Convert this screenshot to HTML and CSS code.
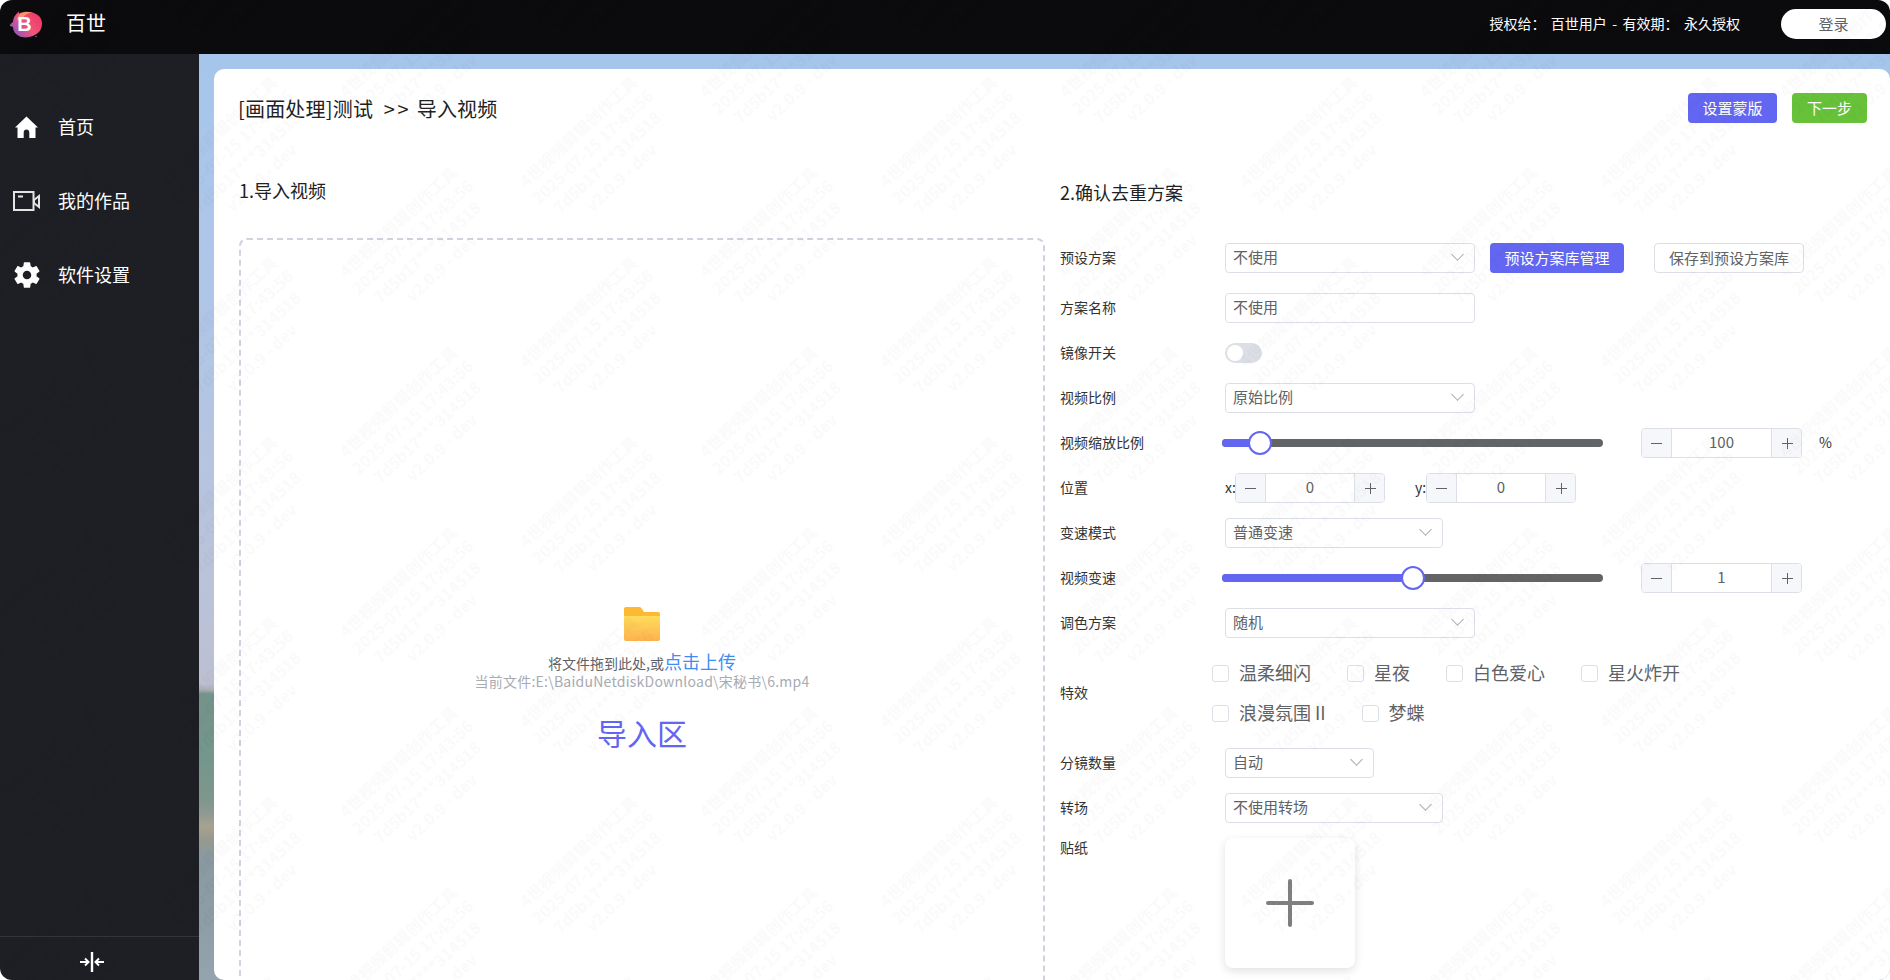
FILE: index.html
```html
<!DOCTYPE html>
<html lang="zh-CN">
<head>
<meta charset="utf-8">
<title>百世</title>
<link rel="stylesheet" href="styles.css">
</head>
<body>
<svg class="sprites" width="0" height="0" aria-hidden="true">
  <symbol id="i-minus" viewBox="0 0 11 11"><path d="M0 5.500h11"/></symbol>
  <symbol id="i-plus" viewBox="0 0 11 11"><path d="M0 5.500h11M5.500 0v11"/></symbol>
</svg>
<div class="app">
  <header class="topbar">
    <svg class="logo" viewBox="0 0 34 28" width="34" height="28">
      <defs>
        <linearGradient id="logo-g" x1="0.95" y1="0.2" x2="0.05" y2="0.8">
          <stop offset="0" stop-color="#ee3a68"/>
          <stop offset="0.5" stop-color="#f0557a"/>
          <stop offset="1" stop-color="#8a55c4"/>
        </linearGradient>
      </defs>
      <path class="logo-blob" d="M10 2.500C15-.5 25 0 30 5c4 4 4 11 0 16-5 5-14 7-20 4-4-2-6-5-6-9-2-1-4-1-3-2 1-2 2-2 3-3 0-4 2-7 6-10.500z"/>
      <path class="logo-flare" d="M11 3c3-2 8-2.500 12-1.500-4 .5-7 2-9 5-1.500 1.800-4 2.500-6 2.500.5-2.500 1.500-4.500 3-6z"/>
      <text class="logo-b" x="15.500" y="19.500">B</text>
      <circle class="logo-dot" cx="27" cy="25.500" r=".8"/>
    </svg>
    <span class="brand">百世</span>
    <div class="topbar-right">
      <span class="license">授权给： 百世用户 - 有效期： 永久授权</span>
      <button class="login">登录</button>
    </div>
  </header>
  <div class="body">
    <aside class="sidebar">
      <nav class="nav">
        <a class="nav-item">
          <svg class="nav-icon" viewBox="0 0 24 24"><path class="fill-w" d="M12 1.500 23.500 12.400H21V23h-6.200v-5.600c0-1.600-1.200-2.800-2.800-2.800s-2.800 1.200-2.800 2.800V23H3V12.400H.5z"/></svg>
          <span>首页</span>
        </a>
        <a class="nav-item">
          <svg class="nav-icon" viewBox="0 0 27 20"><path class="line-w" d="M1 1h19.500v18H1zM5 5.500h5"/><path class="line-w" d="M21 9l5-4v11l-5-4z"/></svg>
          <span>我的作品</span>
        </a>
        <a class="nav-item">
          <svg class="nav-icon gear" viewBox="0 0 24 24"><path class="fill-w" d="M19.140 12.940c.04-.3.06-.61.06-.94 0-.32-.02-.64-.07-.94l2.030-1.580a.49.49 0 0 0 .12-.61l-1.920-3.320a.49.49 0 0 0-.59-.22l-2.390.96c-.5-.38-1.030-.7-1.620-.94l-.36-2.540a.484.484 0 0 0-.48-.41h-3.840c-.24 0-.43.17-.47.41l-.36 2.540c-.59.24-1.130.57-1.620.94l-2.390-.96c-.22-.08-.47 0-.59.22L2.740 8.870c-.12.21-.08.47.12.61l2.030 1.580c-.05.3-.09.63-.09.94s.02.64.07.94l-2.030 1.580a.49.49 0 0 0-.12.61l1.920 3.320c.12.22.37.29.59.22l2.390-.96c.5.38 1.030.7 1.620.94l.36 2.540c.05.24.24.41.48.41h3.840c.24 0 .44-.17.47-.41l.36-2.540c.59-.24 1.130-.56 1.620-.94l2.390.96c.22.08.47 0 .59-.22l1.920-3.320c.12-.22.07-.47-.12-.61l-2.010-1.580zM12 15.200a3.200 3.200 0 1 1 0-6.400 3.200 3.200 0 0 1 0 6.400z"/></svg>
          <span>软件设置</span>
        </a>
      </nav>
      <div class="side-foot">
        <svg class="collapse" viewBox="0 0 26 22" width="26" height="22"><path d="M13 1v20" class="cbar"/><path d="M1 11h8M6 7.500 9.500 11 6 14.500M25 11h-8M20 7.500 16.500 11l3.500 3.500" class="carrow"/></svg>
      </div>
    </aside>
    <main class="main">
      <section class="card">
        <div class="card-head">
          <h1 class="page-title">[画面处理]测试 <span class="gt">&gt;&gt;</span> 导入视频</h1>
          <div class="head-actions">
            <button class="btn btn-primary">设置蒙版</button>
            <button class="btn btn-green">下一步</button>
          </div>
        </div>
        <div class="columns">
          <div class="col-left">
            <h2 class="sec-title">1.导入视频</h2>
            <div class="dropzone">
              <svg class="folder" viewBox="0 0 36 34" width="36" height="34">
                <defs>
                  <linearGradient id="folder-g" x1="0" y1="0" x2="0" y2="1">
                    <stop offset="0" stop-color="#ffdc5c"/>
                    <stop offset="1" stop-color="#fdb24e"/>
                  </linearGradient>
                </defs>
                <path class="folder-back" d="M2 0h13c1.500 0 2 .5 3 2l2 3h14c1.200 0 2 .8 2 2v6H0V2C0 .8.8 0 2 0z"/>
                <path class="folder-front" d="M0 9h36v23c0 1.200-.8 2-2 2H2c-1.200 0-2-.8-2-2z"/>
              </svg>
              <p class="drop-line">将文件拖到此处,或<span class="drop-link">点击上传</span></p>
              <p class="drop-file">当前文件:E:\BaiduNetdiskDownload\宋秘书\6.mp4</p>
              <p class="drop-big">导入区</p>
            </div>
          </div>
          <div class="col-right">
            <h2 class="sec-title sec-title-form">2.确认去重方案</h2>
            <div class="row row-first">
              <label class="lbl">预设方案</label>
              <div class="select w-250"><span>不使用</span><i class="chev"></i></div>
              <button class="btn btn-primary btn-form">预设方案库管理</button>
              <button class="btn btn-plain btn-form">保存到预设方案库</button>
            </div>
            <div class="row">
              <label class="lbl">方案名称</label>
              <div class="select w-250"><span>不使用</span></div>
            </div>
            <div class="row">
              <label class="lbl">镜像开关</label>
              <div class="switch"><i class="knob"></i></div>
            </div>
            <div class="row">
              <label class="lbl">视频比例</label>
              <div class="select w-250"><span>原始比例</span><i class="chev"></i></div>
            </div>
            <div class="row">
              <label class="lbl">视频缩放比例</label>
              <div class="slider"><i class="fill" style="width:10%"></i><i class="thumb" style="left:10%"></i></div>
              <div class="num w-161">
                <span class="num-btn"><svg class="sign"><use href="#i-minus"/></svg></span>
                <span class="num-val">100</span>
                <span class="num-btn num-btn-r"><svg class="sign"><use href="#i-plus"/></svg></span>
              </div>
              <span class="unit">%</span>
            </div>
            <div class="row">
              <label class="lbl">位置</label>
              <span class="axis">x:</span>
              <div class="num w-150">
                <span class="num-btn"><svg class="sign"><use href="#i-minus"/></svg></span>
                <span class="num-val">0</span>
                <span class="num-btn num-btn-r"><svg class="sign"><use href="#i-plus"/></svg></span>
              </div>
              <span class="axis axis-y">y:</span>
              <div class="num w-150">
                <span class="num-btn"><svg class="sign"><use href="#i-minus"/></svg></span>
                <span class="num-val">0</span>
                <span class="num-btn num-btn-r"><svg class="sign"><use href="#i-plus"/></svg></span>
              </div>
            </div>
            <div class="row">
              <label class="lbl">变速模式</label>
              <div class="select w-218"><span>普通变速</span><i class="chev"></i></div>
            </div>
            <div class="row">
              <label class="lbl">视频变速</label>
              <div class="slider"><i class="fill" style="width:50.100%"></i><i class="thumb" style="left:50.100%"></i></div>
              <div class="num w-161">
                <span class="num-btn"><svg class="sign"><use href="#i-minus"/></svg></span>
                <span class="num-val">1</span>
                <span class="num-btn num-btn-r"><svg class="sign"><use href="#i-plus"/></svg></span>
              </div>
            </div>
            <div class="row row-tail">
              <label class="lbl">调色方案</label>
              <div class="select w-250"><span>随机</span><i class="chev"></i></div>
            </div>
            <div class="row row-tail">
              <label class="lbl lbl-fx">特效</label>
              <div class="checks">
                <div class="check-row">
                  <label class="check"><i class="box"></i>温柔细闪</label>
                  <label class="check"><i class="box"></i>星夜</label>
                  <label class="check"><i class="box"></i>白色爱心</label>
                  <label class="check"><i class="box"></i>星火炸开</label>
                </div>
                <div class="check-row">
                  <label class="check"><i class="box"></i>浪漫氛围 II</label>
                  <label class="check"><i class="box"></i>梦蝶</label>
                </div>
              </div>
            </div>
            <div class="row">
              <label class="lbl">分镜数量</label>
              <div class="select w-149"><span>自动</span><i class="chev"></i></div>
            </div>
            <div class="row">
              <label class="lbl">转场</label>
              <div class="select w-218"><span>不使用转场</span><i class="chev"></i></div>
            </div>
            <div class="row row-top">
              <label class="lbl lbl-top">贴纸</label>
              <div class="sticker"><svg class="sticker-plus" viewBox="0 0 48 48" width="48" height="48"><path d="M2 24h44M24 2v44"/></svg></div>
            </div>
          </div>
        </div>
      </section>
    </main>
  </div>
</div>
<svg class="watermark" width="1890" height="980" aria-hidden="true">
  <defs>
    <g id="wm-tile">
      <text y="-30">4世视频剪辑创作工具</text>
      <text y="-9">2025-07-15 17:43:56</text>
      <text y="12">7d5b17***314518</text>
      <text y="33">v2.0.9 - dev</text>
    </g>
    <pattern id="wm-pattern" x="153" y="68" width="360" height="180" patternUnits="userSpaceOnUse">
      <use href="#wm-tile" transform="translate(90 90) rotate(-43)"/>
      <use href="#wm-tile" transform="translate(270 0) rotate(-43)"/>
      <use href="#wm-tile" transform="translate(270 180) rotate(-43)"/>
    </pattern>
  </defs>
  <rect class="wm-rect" width="1890" height="980"/>
</svg>
</body>
</html>
```
FILE: styles.css
```css
* { box-sizing: border-box; }
html, body { margin: 0; height: 100%; background: #fff; overflow: hidden; }
body { font-family: "Noto Sans CJK SC", "Noto Sans", sans-serif; font-size: 14px; color: #333; }
h1, h2, p { margin: 0; font-weight: 400; }
button { font-family: inherit; cursor: pointer; }
.sprites { position: absolute; }

.app { height: 980px; display: flex; flex-direction: column; border-radius: 12px; overflow: hidden; }

.topbar { height: 54px; flex: none; background: #0b0b0e; display: flex; align-items: center; padding: 0 4px 6px 9px; color: #fff; }
.logo { flex: none; margin-top: 1px; }
.logo-blob { fill: url(#logo-g); }
.logo-flare { fill: #f59a6a; }
.logo-dot { fill: #8a55c4; }
.logo-b { fill: #fff; font-family: "Liberation Sans", sans-serif; font-weight: 700; font-size: 20px; text-anchor: middle; }
.brand { margin-left: 23px; font-size: 20px; line-height: 28px; padding-bottom: 2px; }
.topbar-right { margin-left: auto; display: flex; align-items: center; }
.license { font-size: 14px; line-height: 20px; white-space: pre; word-spacing: 2.300px; padding-bottom: 2px; }
.login { width: 105px; height: 30px; margin-left: 41px; border: 0; border-radius: 15px; background: #fff; color: #606266; font-size: 15px; padding: 0 0 2px; }

.body { flex: 1; display: flex; min-height: 0; }

.sidebar { width: 199px; flex: none; background: #1e1f24; display: flex; flex-direction: column; color: #fff; }
.nav { flex: 1; padding-top: 36px; }
.nav-item { height: 74px; display: flex; align-items: center; padding-left: 13px; font-size: 18px; line-height: 24px; }
.nav-item span { padding-bottom: 2px; }
.nav-icon { width: 27px; height: 24px; margin-right: 18px; flex: none; }
.gear { width: 32px; height: 32px; margin: 0 15px 0 -2px; }
.fill-w { fill: #fff; }
.line-w { fill: none; stroke: #e4e4e4; stroke-width: 2; }
.side-foot { height: 44px; flex: none; border-top: 1px solid #34353a; display: flex; align-items: center; justify-content: center; padding: 7px 15px 0 0; }
.collapse { display: block; }
.cbar { stroke: #fff; stroke-width: 2.400; fill: none; }
.carrow { stroke: #fff; stroke-width: 2; fill: none; }

.main { flex: 1; min-width: 0; padding: 15px 0 0 15px; background: linear-gradient(to bottom, #a6c5ec 0, #aec6e9 200px, #b3c5e3 350px, #bbc2d7 560px, #bdbfd2 630px, #a9aeb4 636px, #74938a 640px, #74968c 700px, #7f968d 745px, #8f9a94 760px, #a8a28f 772px, #97998e 786px, #8a9aa0 800px, #8c9da6 860px, #93a4ae 926px); }

.card { height: 100%; background: #fff; border-radius: 10px; padding: 24px 23px 0 25px; overflow: hidden; }
.card-head { display: flex; justify-content: space-between; align-items: flex-start; height: 34px; }
.page-title { font-size: 20px; line-height: 32px; color: #222; letter-spacing: .2px; margin-left: -1px; }
.gt { letter-spacing: 2.500px; margin: 0 1px 0 6px; }
.head-actions { display: flex; gap: 15px; }

.btn { height: 30px; border: 0; border-radius: 4px; font-size: 15px; padding: 0 14.500px 2px; white-space: nowrap; }
.btn-primary { background: #6366f1; color: #fff; }
.btn-green { background: #67c23a; color: #fff; padding: 0 15px 2px; }
.btn-plain { background: #fff; color: #606266; border: 1px solid #dcdfe6; margin-left: 30px; padding: 0 14px 2px; }
.select + .btn-form { margin-left: 15px; }

.columns { display: flex; gap: 15px; margin-top: 49px; }
.col-left { width: 806px; flex: none; }
.col-right { flex: 1; min-width: 0; padding-top: 2px; }

.sec-title { font-size: 18px; line-height: 28px; height: 30px; color: #222; margin-bottom: 32px; }
.sec-title-form { margin-bottom: 35px; }

.dropzone { height: 800px; border: 2px dashed #d2d2de; border-radius: 8px; padding-top: 367px; display: flex; flex-direction: column; align-items: center; }
.folder { display: block; flex: none; margin: 0 0 10px -1px; }
.folder-back { fill: #fdb933; }
.folder-front { fill: url(#folder-g); }
.drop-line { font-size: 14px; line-height: 20px; color: #606266; white-space: nowrap; }
.drop-link { font-size: 18px; line-height: 20px; color: #3f8cf6; }
.drop-file { margin-top: -2px; font-size: 14px; line-height: 20px; color: #a8abb2; white-space: nowrap; letter-spacing: .240px; }
.drop-big { margin-top: 21px; font-size: 30px; line-height: 40px; color: #6366f1; }

.row { display: flex; align-items: center; min-height: 30px; margin-bottom: 15px; }
.row-first, .row-tail { margin-bottom: 20px; }
.row-top { align-items: flex-start; }
.lbl { width: 165px; flex: none; font-size: 14px; line-height: 20px; color: #333; padding-bottom: 2px; }
.lbl-fx { width: 152px; }
.lbl-top { margin-top: -1px; }

.select { height: 30px; flex: none; position: relative; display: flex; align-items: center; padding: 0 7px 3px; border: 1px solid #dcdfe6; border-radius: 4px; font-size: 15px; color: #606266; background: #fff; }
.w-250 { width: 250px; }
.w-218 { width: 218px; }
.w-149 { width: 149px; }
.chev { position: absolute; right: 12.500px; top: 6px; width: 9px; height: 9px; border-right: 1px solid #a8abb2; border-bottom: 1px solid #a8abb2; transform: rotate(45deg); }

.switch { width: 37px; height: 20px; border-radius: 10px; background: #dcdfe6; padding: 2px; flex: none; }
.knob { display: block; width: 16px; height: 16px; border-radius: 50%; background: #fff; }

.slider { width: 381px; height: 8px; flex: none; margin: 0 38px 0 -3px; border-radius: 4px; background: #636466; position: relative; }
.fill { position: absolute; left: 0; top: 0; height: 8px; border-radius: 4px; background: #6366f1; }
.thumb { position: absolute; top: 4px; width: 24px; height: 24px; margin: -12px 0 0 -12px; border-radius: 50%; background: #fff; border: 2px solid #6366f1; }

.num { height: 30px; flex: none; display: flex; border: 1px solid #dcdfe6; border-radius: 4px; background: #fff; color: #606266; }
.w-161 { width: 161px; }
.w-150 { width: 150px; }
.num-btn { width: 30px; flex: none; display: flex; align-items: center; justify-content: center; background: #f5f7fa; border-right: 1px solid #dcdfe6; border-radius: 3px 0 0 3px; }
.num-btn-r { border-right: 0; border-left: 1px solid #dcdfe6; border-radius: 0 3px 3px 0; padding-left: 2px; }
.num-val { flex: 1; text-align: center; line-height: 26px; font-size: 15px; }
.sign { width: 11px; height: 11px; fill: none; stroke: #606266; stroke-width: 1; }
.unit { margin-left: 17px; font-size: 14px; color: #333; padding-bottom: 2px; }
.axis { width: 10px; flex: none; font-size: 14px; color: #333; white-space: nowrap; padding-bottom: 2px; }
.axis-y { margin-left: 30px; width: 11px; }

.checks { display: flex; flex-direction: column; gap: 10px; flex: 1; min-width: 0; }
.check-row { display: flex; gap: 36px; }
.check { display: flex; align-items: center; height: 30px; padding-bottom: 3px; font-size: 18px; color: #606266; white-space: nowrap; }
.box { width: 17px; height: 17px; flex: none; margin: 3px 10px 0 0; border: 1px solid #dcdfe6; border-radius: 3px; background: #fff; }

.sticker { width: 130px; height: 130px; flex: none; display: flex; align-items: center; justify-content: center; border-radius: 8px; background: #fff; box-shadow: 0 3px 10px rgba(0, 0, 0, .12); }
.sticker-plus { fill: none; stroke: #808080; stroke-width: 4; stroke-linecap: round; }

.watermark { position: fixed; left: 0; top: 0; pointer-events: none; }
.wm-rect { fill: url(#wm-pattern); }
#wm-tile text { font-family: "Noto Sans CJK SC", "Noto Sans", sans-serif; font-size: 16px; font-weight: 700; fill: rgba(0, 0, 0, .018); text-anchor: middle; }
```
